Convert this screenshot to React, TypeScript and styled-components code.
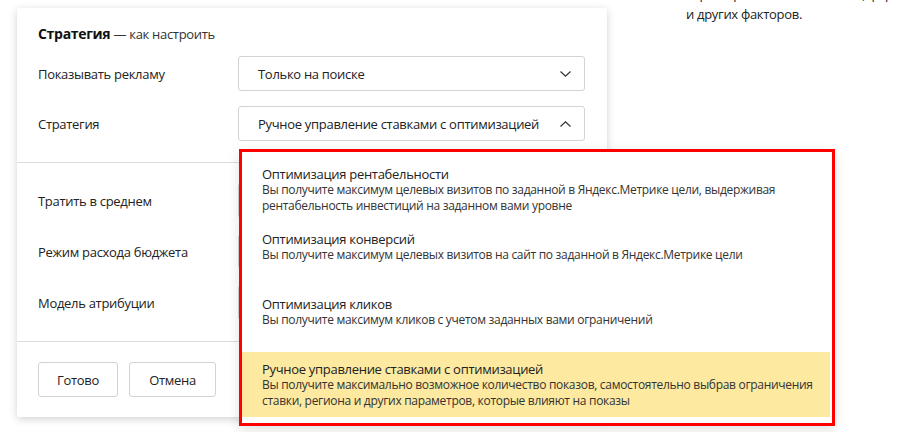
import React from "react";
import styled, { createGlobalStyle } from "styled-components";

const GlobalStyle = createGlobalStyle`
  html, body {
    margin: 0;
    padding: 0;
    background: #fff;
    font-family: "Open Sans", "Noto Sans", sans-serif;
    color: #222;
    overflow: hidden;
  }
`;

const Page = styled.div`
  display: flex;
  flex-direction: row;
  align-items: flex-start;
  width: 910px;
  height: 432px;
  overflow: hidden;
  letter-spacing: -0.3px;
`;

const Card = styled.div`
  box-sizing: border-box;
  flex: none;
  width: 590px;
  margin: 8px 0 0 17px;
  background: #fff;
  border-radius: 2px;
  box-shadow: 0 2px 8px rgba(0, 0, 0, 0.18);
`;

const Section = styled.div<{ $top: number; $bottom: number; $gap: number }>`
  display: flex;
  flex-direction: column;
  gap: ${p => p.$gap}px;
  padding: ${p => p.$top}px 22px ${p => p.$bottom}px 21px;
  & + & {
    border-top: 1px solid #dcdcdc;
  }
`;

const Header = styled.div`
  font-size: 13px;
  line-height: 20px;
  color: #333;
  margin-bottom: -3px;
  margin-top: -1px;

  b {
    font-size: 14px;
    font-weight: 700;
    color: #111;
  }
`;

const Row = styled.div`
  display: grid;
  grid-template-columns: 200px 347px;
  align-items: center;
  height: 35px;
`;

const Label = styled.div`
  font-size: 13px;
  color: #222;
`;

const Control = styled.div`
  position: relative;
  height: 100%;
`;

const Select = styled.div`
  box-sizing: border-box;
  height: 100%;
  display: flex;
  align-items: center;
  justify-content: space-between;
  padding: 0 13px 0 19px;
  border: 1px solid #d3d3d3;
  border-radius: 3px;
  font-size: 13px;
  color: #222;
`;

const Chevron = ({ up }: { up?: boolean }) => (
  <svg width="11" height="6" viewBox="0 0 11 6" fill="none">
    <path
      d={up ? "M0.5 5.5L5.5 0.8L10.5 5.5" : "M0.5 0.5L5.5 5.2L10.5 0.5"}
      stroke="#333"
      strokeWidth="1.2"
    />
  </svg>
);

const Buttons = styled.div`
  display: flex;
  gap: 11px;
`;

const Button = styled.button<{ $width: number }>`
  box-sizing: border-box;
  width: ${p => p.$width}px;
  height: 35px;
  background: #fff;
  border: 1px solid #d3d3d3;
  border-radius: 3px;
  font-family: inherit;
  letter-spacing: inherit;
  font-size: 13px;
  color: #222;
`;

const Popup = styled.div`
  position: absolute;
  z-index: 2;
  top: calc(100% + 8px);
  left: 1px;
  box-sizing: border-box;
  width: 596px;
  height: 277px;
  padding: 5px 2px 7px 0;
  border: 3px solid #ff0000;
  background: #fff;
  box-shadow: 0 4px 12px rgba(0, 0, 0, 0.12);
`;

const Option = styled.div<{ $active?: boolean }>`
  box-sizing: border-box;
  height: 65px;
  padding: 9px 6px 0 20px;
  background: ${p => (p.$active ? "#fde9a0" : "transparent")};
`;

const OptionTitle = styled.div`
  font-size: 13px;
  line-height: 16px;
  color: #222;
`;

const OptionText = styled.div`
  font-size: 12px;
  line-height: 16px;
  color: #333;
`;

const Aside = styled.div`
  margin: -16px 0 0 79px;
  white-space: nowrap;
  font-size: 13px;
  line-height: 20px;
  color: #222;
`;

const options = [
  {
    title: "Оптимизация рентабельности",
    text: "Вы получите максимум целевых визитов по заданной в Яндекс.Метрике цели, выдерживая рентабельность инвестиций на заданном вами уровне",
  },
  {
    title: "Оптимизация конверсий",
    text: "Вы получите максимум целевых визитов на сайт по заданной в Яндекс.Метрике цели",
  },
  {
    title: "Оптимизация кликов",
    text: "Вы получите максимум кликов с учетом заданных вами ограничений",
  },
  {
    title: "Ручное управление ставками с оптимизацией",
    text: "Вы получите максимально возможное количество показов, самостоятельно выбрав ограничения ставки, региона и других параметров, которые влияют на показы",
    active: true,
  },
];

export default function App() {
  return (
    <Page>
      <GlobalStyle />
      <Card>
        <Section $top={17} $bottom={21} $gap={15}>
          <Header>
            <b>Стратегия</b> — как настроить
          </Header>
          <Row>
            <Label>Показывать рекламу</Label>
            <Control>
              <Select>
                Только на поиске
                <Chevron />
              </Select>
            </Control>
          </Row>
          <Row>
            <Label>Стратегия</Label>
            <Control>
              <Select>
                Ручное управление ставками с оптимизацией
                <Chevron up />
              </Select>
              <Popup>
                {options.map(o => (
                  <Option key={o.title} $active={o.active}>
                    <OptionTitle>{o.title}</OptionTitle>
                    <OptionText>{o.text}</OptionText>
                  </Option>
                ))}
              </Popup>
            </Control>
          </Row>
        </Section>
        <Section $top={20} $bottom={21} $gap={16}>
          <Row>
            <Label>Тратить в среднем</Label>
            <Control>
              <Select />
            </Control>
          </Row>
          <Row>
            <Label>Режим расхода бюджета</Label>
            <Control>
              <Select />
            </Control>
          </Row>
          <Row>
            <Label>Модель атрибуции</Label>
            <Control>
              <Select />
            </Control>
          </Row>
        </Section>
        <Section $top={20} $bottom={20} $gap={0}>
          <Buttons>
            <Button $width={80}>Готово</Button>
            <Button $width={87}>Отмена</Button>
          </Buttons>
        </Section>
      </Card>
      <Aside>
        характеристик пользователя, формы
        <br />
        и других факторов.
      </Aside>
    </Page>
  );
}
